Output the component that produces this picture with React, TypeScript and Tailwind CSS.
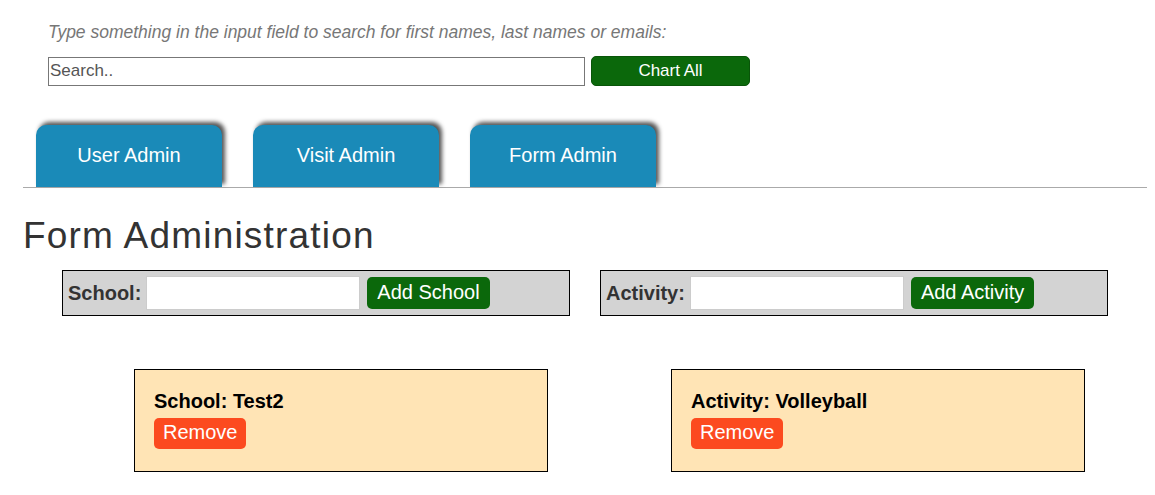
import { useState } from "react";

const tabs = ["User Admin", "Visit Admin", "Form Admin"];

function AddPanel({ label, action }: { label: string; action: string }) {
  const [value, setValue] = useState("");
  return (
    <div className="w-[508px] h-[46px] bg-[#d3d3d3] border border-black flex items-center pl-[5px]">
      <label className="text-[20px] font-bold text-[#333] mr-[5px]">{label}</label>
      <input
        value={value}
        onChange={(e) => setValue(e.target.value)}
        className="w-[214px] h-[34px] bg-white border border-[#ccc] outline-none px-1 text-[16px]"
      />
      <button className="ml-[7px] h-[32px] px-[10px] pb-[2px] rounded-[5px] bg-[#0b680b] text-white text-[20px] leading-none">
        {action}
      </button>
    </div>
  );
}

function ItemCard({ text }: { text: string }) {
  return (
    <div className="w-[414px] h-[103px] bg-[#ffe4b5] border border-black pl-[19px] pt-[20px]">
      <div className="text-[20px] font-bold text-black leading-[22px]">{text}</div>
      <button className="mt-[6px] h-[31px] px-[9px] pb-[3px] rounded-[5px] bg-[#fc4a1f] text-white text-[20px] leading-none">
        Remove
      </button>
    </div>
  );
}

export default function App() {
  return (
    <div className="w-[1155px] h-[495px] bg-white font-['Liberation_Sans',Arial,sans-serif] text-[#333]">
      {/* search */}
      <div className="pl-[48px] pt-[22px]">
        <p className="italic text-[17.5px] leading-[20px] text-[#777]">
          Type something in the input field to search for first names, last names or emails:
        </p>
        <div className="mt-[14px] flex items-center">
          <input
            placeholder="Search.."
            className="w-[537px] h-[29px] border border-[#777] px-[1px] text-[17px] placeholder:text-[#555] outline-none"
          />
          <button className="ml-[6px] w-[159px] h-[30px] pb-[2px] rounded-[5px] bg-[#0b680b] border border-[#095509] text-white text-[17px] leading-none">
            Chart All
          </button>
        </div>
      </div>

      {/* tabs */}
      <div className="ml-[23px] w-[1124px] mt-[39px] border-b border-[#aaa] flex gap-[31px] pl-[13px]">
        {tabs.map((t) => (
          <button
            key={t}
            className="w-[186px] h-[62px] pb-[2px] rounded-t-[10px] bg-[#1a8ab8] text-white text-[20px] shadow-[3px_-3px_4px_#555]"
          >
            {t}
          </button>
        ))}
      </div>

      <h1 className="ml-[23px] mt-[28px] text-[37px] leading-[40px] tracking-[1.2px] text-[#333]">
        Form Administration
      </h1>

      <div className="ml-[62px] mt-[14px] flex gap-[30px]">
        <AddPanel label="School:" action="Add School" />
        <AddPanel label="Activity:" action="Add Activity" />
      </div>

      <div className="ml-[134px] mt-[53px] flex gap-[123px]">
        <ItemCard text="School: Test2" />
        <ItemCard text="Activity: Volleyball" />
      </div>
    </div>
  );
}
